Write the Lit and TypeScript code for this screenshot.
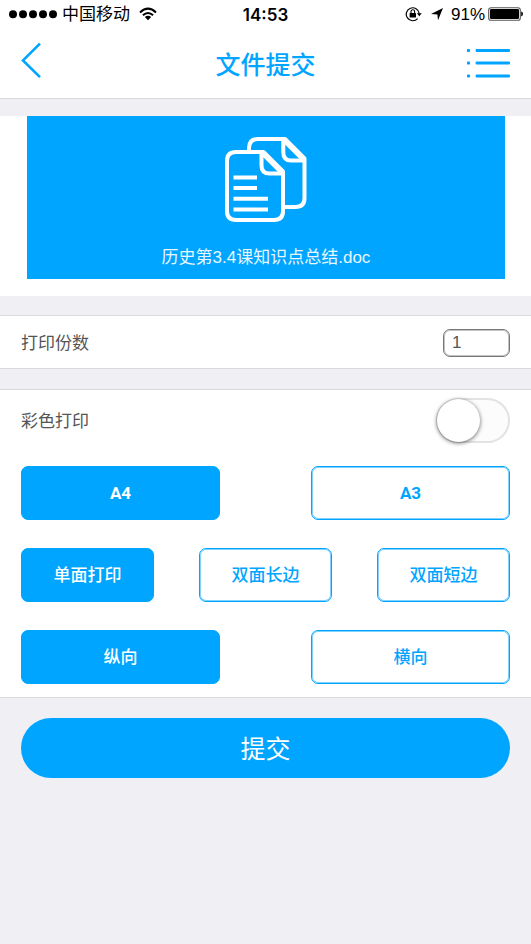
import { LitElement, html, css, svg } from "lit";
import { customElement, state } from "lit/decorators.js";
import { classMap } from "lit/directives/class-map.js";

interface OptionGroup {
  name: string;
  options: string[];
}

const GROUPS: OptionGroup[] = [
  { name: "纸张大小", options: ["A4", "A3"] },
  { name: "单双面", options: ["单面打印", "双面长边", "双面短边"] },
  { name: "方向", options: ["纵向", "横向"] },
];

@customElement("status-bar")
export class StatusBar extends LitElement {
  static styles = css`
    :host {
      display: flex;
      align-items: center;
      height: 28px;
      padding: 0 8px;
      color: #000;
      font-size: 17px;
      line-height: 20px;
    }
    .side {
      flex: 1;
      display: flex;
      align-items: center;
    }
    .carrier {
      margin: 0 9px 0 5px;
      padding-top: 2px;
    }
    .clock {
      padding-top: 2px;
      font-family: Inter, sans-serif;
      font-weight: 600;
    }
    .end {
      justify-content: flex-end;
    }
    .lock {
      margin-right: 8px;
    }
    .percent {
      margin: 0 3px 0 7px;
      padding-top: 2px;
      font-family: "Liberation Sans", sans-serif;
    }
    svg {
      display: block;
    }
  `;

  render() {
    return html`
      <div class="side">
        <svg width="49" height="14" viewBox="0 0 49 14" aria-hidden="true">
          ${[5, 15, 25, 35, 45].map((x) => svg`<circle cx=${x} cy="7.3" r="4" />`)}
        </svg>
        <span class="carrier">中国移动</span>
        <svg width="18" height="14" viewBox="0 0 18 14" aria-hidden="true">
          <g fill="none" stroke="#000" stroke-width="2">
            <path d="M1 5.4Q9-2.2 17 5.4" />
            <path d="M3.9 8.3Q9 3.6 14.1 8.3" />
          </g>
          <path d="M5.8 10.1Q9 7.4 12.2 10.1L9 13.2Z" />
        </svg>
      </div>
      <time class="clock">14:53</time>
      <div class="side end">
        <svg class="lock" width="17" height="16" viewBox="0 0 17 16" aria-hidden="true">
          <path d="M12.6 12.6A6.5 6.500 0 1 1 14.200 7.400" fill="none" stroke="#000" stroke-width="1.2" />
          <path d="M11.800 7.2H16.800L14.300 10.300Z" />
          <rect x="4.6" y="6.9" width="6.400" height="4.600" rx=".5" />
          <path d="M6 7V5.600a1.800 1.800 0 0 1 3.600 0V7" fill="none" stroke="#000" stroke-width="1.1" />
        </svg>
        <svg width="14" height="14" viewBox="0 0 14 14" aria-hidden="true">
          <path d="M13 1L8 13.200L7.400 7.600L1 7Z" />
        </svg>
        <span class="percent">91%</span>
        <svg width="35" height="14" viewBox="0 0 35 14" aria-hidden="true">
          <rect x=".7" y=".7" width="31.6" height="12.6" rx="2.4" fill="none" stroke="#555" stroke-width="1.1" />
          <rect x="2" y="2" width="29" height="10" rx="1.2" />
          <path d="M33.2 4.6Q35 5 35 7T33.2 9.4Z" />
        </svg>
      </div>
    `;
  }
}

@customElement("app-root")
export class AppRoot extends LitElement {
  @state() private chosen: number[] = [0, 0, 0];

  static styles = css`
    :host {
      --accent: #00a5ff;
      --line: #d9d9dc;
      display: block;
      min-height: 100vh;
      background: #efeff4;
      color: #555;
      font-family: "Liberation Sans", "Noto Sans CJK SC", sans-serif;
      font-size: 17px;
      line-height: 24px;
    }
    * {
      box-sizing: border-box;
    }
    button,
    input {
      margin: 0;
      font: inherit;
    }
    svg {
      display: block;
    }
    .top {
      background: #fff;
      border-bottom: 1px solid var(--line);
    }
    .nav {
      display: flex;
      align-items: center;
      justify-content: space-between;
      height: 70px;
      padding: 0 20px 4px;
    }
    .icon-button {
      padding: 0;
      border: 0;
      background: none;
      color: var(--accent);
      cursor: pointer;
    }
    .back {
      width: 44px;
    }
    .menu {
      padding-top: 4px;
    }
    .title {
      margin: 0;
      padding-top: 8px;
      color: var(--accent);
      font-size: 25px;
      line-height: 36px;
      font-weight: 500;
    }
    .document {
      margin-top: 17px;
      padding: 0 26px 17px 27px;
      background: #fff;
    }
    .tile {
      display: flex;
      flex-direction: column;
      align-items: center;
      gap: 22px;
      padding: 20px 0 9px;
      background: var(--accent);
      color: #e8f7ff;
    }
    .tile svg {
      color: #fff;
    }
    .panel {
      margin-top: 19px;
      padding: 0 21px;
      background: #fff;
      border: solid var(--line);
      border-width: 1px 0;
    }
    .panel.settings {
      margin-top: 20px;
      padding-bottom: 13px;
    }
    .row {
      display: flex;
      align-items: center;
      justify-content: space-between;
      height: 52px;
    }
    .row label {
      padding-top: 2px;
    }
    .settings .row {
      height: 61px;
    }
    .count {
      width: 67px;
      height: 28px;
      padding: 0 8px;
      border: 1px solid #777;
      border-radius: 7px;
      box-shadow: inset 0 0 0 1px #c4c4c4;
      background: #fff;
      color: #555;
      outline: none;
    }
    .copies {
      padding-top: 1px;
    }
    .copies .row {
      height: 51px;
    }
    .switch {
      appearance: none;
      width: 74px;
      height: 45px;
      border: 2px solid #e3e3e3;
      border-radius: 23px;
      background: #fcfcfc;
      cursor: pointer;
    }
    .switch::before {
      content: "";
      display: block;
      width: 43px;
      height: 43px;
      margin: -1px;
      border-radius: 50%;
      background: #fff;
      box-shadow: 0 1px 4px rgba(0, 0, 0, 0.6);
    }
    .switch:checked {
      background: var(--accent);
      border-color: var(--accent);
    }
    .switch:checked::before {
      margin-left: 28px;
    }
    .options {
      display: grid;
      grid-auto-flow: column;
      grid-auto-columns: 1fr;
      gap: 45px;
      margin-top: 28px;
    }
    .row + .options {
      margin-top: 15px;
    }
    .options.pair {
      gap: 91px;
    }
    .option {
      height: 54px;
      padding: 2px 0 0;
      border: 1px solid var(--accent);
      border-radius: 7px;
      box-shadow: inset 0 0 0 1px #80d2ff;
      background: #fff;
      color: var(--accent);
      font-weight: 500;
      cursor: pointer;
    }
    .option.latin {
      padding: 0;
      font-family: Roboto, sans-serif;
      font-weight: 700;
    }
    .option.on {
      background: var(--accent);
      box-shadow: none;
      color: #fff;
    }
    .actions {
      padding: 20px 21px;
    }
    .submit {
      display: block;
      width: 100%;
      height: 60px;
      padding: 2px 0 0;
      border: 0;
      border-radius: 30px;
      background: var(--accent);
      color: #fff;
      font-size: 25px;
      line-height: 36px;
      cursor: pointer;
    }
  `;

  private choose(group: number, option: number) {
    this.chosen = this.chosen.map((v, i) => (i === group ? option : v));
  }

  render() {
    return html`
      <header class="top">
        <status-bar></status-bar>
        <nav class="nav">
          <button class="icon-button back" aria-label="返回">
            <svg width="22" height="36" viewBox="0 0 22 36" fill="none" stroke="currentColor" stroke-width="2.6">
              <path d="M20 .6L3 17.4L20 34.2" />
            </svg>
          </button>
          <h1 class="title">文件提交</h1>
          <button class="icon-button menu" aria-label="菜单">
            <svg width="44" height="30" viewBox="0 0 44 30" fill="currentColor">
              ${[2.5, 15, 28].map(
                (y) => svg`
                  <rect x="0" y=${y - 1.4} width="3" height="2.8" rx=".6" />
                  <rect x="8.6" y=${y - 1.4} width="34.4" height="2.8" rx="1" />
                `,
              )}
            </svg>
          </button>
        </nav>
      </header>
      <main>
        <section class="document">
          <div class="tile">
            <svg width="84" height="88" viewBox="0 0 84 88" fill="none" stroke="currentColor" stroke-width="4" stroke-linejoin="round" aria-hidden="true">
              <path d="M25 15V12Q25 3 34 3H61L80.500 22.500V62Q80.500 71 71.500 71H60" />
              <path d="M59.300 3V16.500Q59.300 24.500 67.300 24.500H80" />
              <path d="M12 16H39.500L59 35.500V75Q59 84 50 84H12Q3 84 3 75V25Q3 16 12 16Z" />
              <path d="M37.500 16V29.500Q37.500 37.500 45.500 37.500H59" />
              <path d="M60 4L80 24M38.500 17L58.500 37" stroke-width="5" />
              <path d="M9.500 41.500H33M9.500 52H33M9.500 62.700H44M9.500 73.400H44" />
            </svg>
            <span>历史第3.4课知识点总结.doc</span>
          </div>
        </section>
        <section class="panel copies">
          <div class="row">
            <label for="count">打印份数</label>
            <input class="count" id="count" type="text" inputmode="numeric" value="1" />
          </div>
        </section>
        <section class="panel settings">
          <div class="row">
            <label for="color">彩色打印</label>
            <input class="switch" id="color" type="checkbox" role="switch" />
          </div>
          ${GROUPS.map(
            (group, g) => html`
              <div
                class=${classMap({ options: true, pair: group.options.length === 2 })}
                role="group"
                aria-label=${group.name}
              >
                ${group.options.map(
                  (label, o) => html`
                    <button
                      class=${classMap({ option: true, latin: g === 0, on: this.chosen[g] === o })}
                      aria-pressed=${this.chosen[g] === o}
                      @click=${() => this.choose(g, o)}
                    >${label}</button>
                  `,
                )}
              </div>
            `,
          )}
        </section>
        <div class="actions">
          <button class="submit">提交</button>
        </div>
      </main>
    `;
  }
}
